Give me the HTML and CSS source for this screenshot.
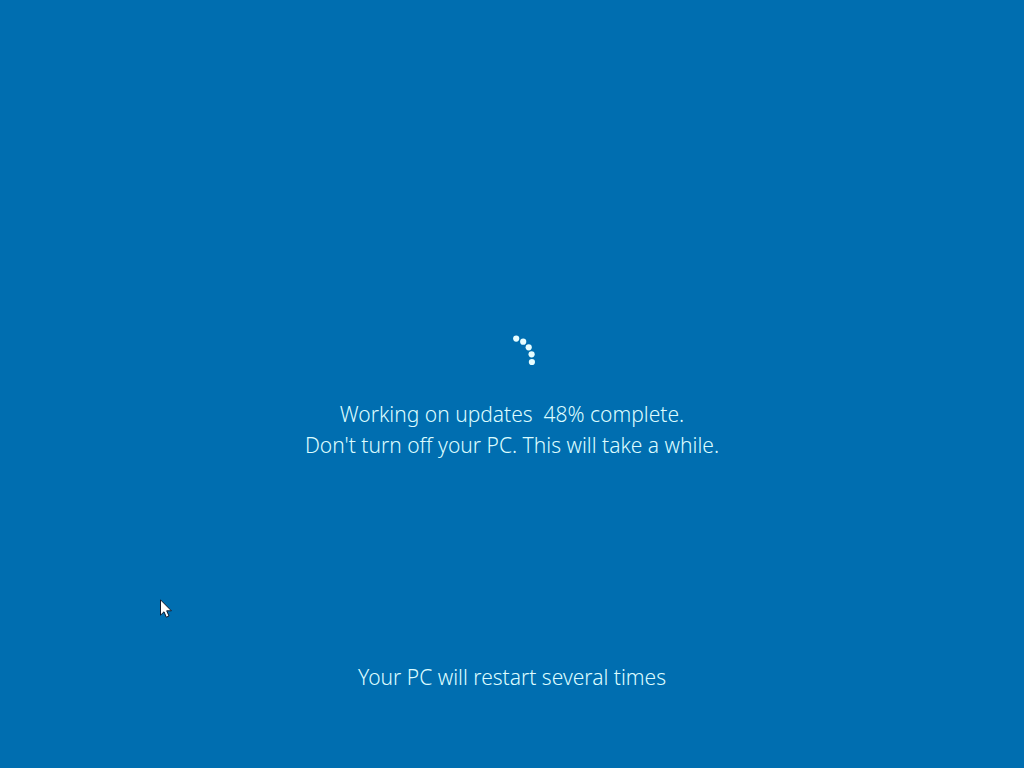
FILE: index.html
```html
<!DOCTYPE html>
<html lang="en">
<head>
    <meta charset="UTF-8">
    <meta name="viewport" content="width=device-width, initial-scale=1.0">
    <title>Working on updates</title>
    <link rel="stylesheet" href="styles.css">
</head>
<body>

<main class="update-screen">
    <div class="status" role="status">
        <svg class="spinner" width="48" height="48" viewBox="0 0 48 48" aria-hidden="true">
            <circle cx="28.2" cy="4.6" r="3.1"/>
            <circle cx="35.2" cy="7.7" r="3.1"/>
            <circle cx="40.7" cy="13.3" r="3.1"/>
            <circle cx="43.6" cy="20.3" r="3.1"/>
            <circle cx="43.9" cy="28" r="3.1"/>
        </svg>
        <p class="message">Working on updates&nbsp; 48% complete.</p>
        <p class="message">Don't turn off your PC. This will take a while.</p>
    </div>
    <p class="message">Your PC will restart several times</p>
</main>

<svg class="cursor" width="12" height="19" viewBox="0 0 12 19" aria-hidden="true">
    <path d="M.5 .8V16.2L4 12.8L6.3 18.2L9 17L6.7 11.8H11.4Z"/>
</svg>

</body>
</html>
```

FILE: styles.css
```css
body {
    margin: 0;
    background-color: #006eb0;
    color: #dcfcff;
    font-family: 'Noto Sans', 'Open Sans', sans-serif;
    font-weight: 300;
}

.update-screen {
    box-sizing: border-box;
    min-height: 100vh;
    padding: 133px 16px 75px;
    display: flex;
    flex-direction: column;
    align-items: center;
    text-align: center;
}

.status {
    flex: 1;
    display: flex;
    flex-direction: column;
    align-items: center;
    justify-content: center;
}

.spinner {
    margin-bottom: 17px;
    fill: #e6fdff;
}

.message {
    margin: 0;
    font-size: 21px;
    line-height: 31px;
}

/* mouse pointer floating over the screen */
.cursor {
    position: absolute;
    left: 160px;
    top: 599px;
    fill: #fff;
    stroke: #10182c;
    stroke-width: 1;
}
```
